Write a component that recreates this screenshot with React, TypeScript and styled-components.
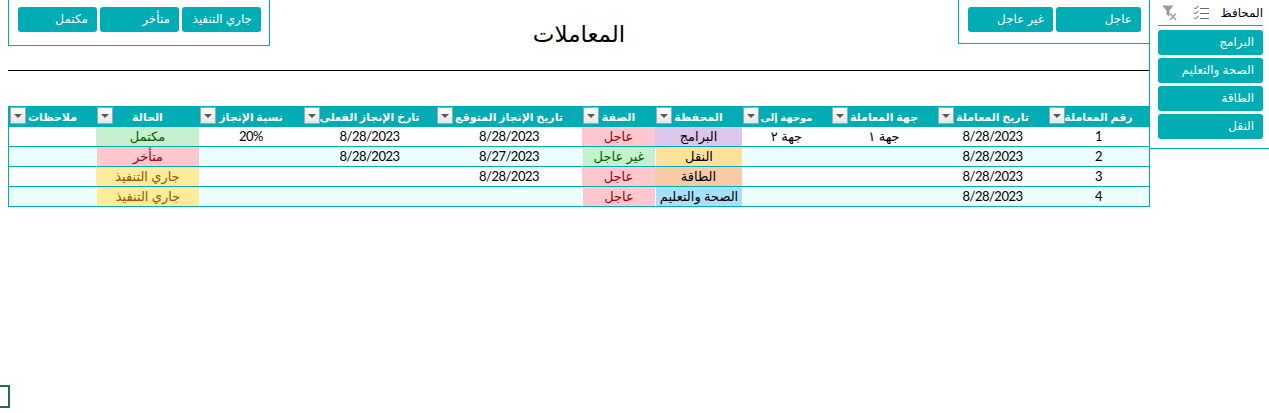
import React from "react";
import styled, { createGlobalStyle } from "styled-components";

const teal = "#00adb5";

const GlobalStyle = createGlobalStyle`
	html,
	body {
		margin: 0;
		padding: 0;
		background: #ffffff;
		overflow: hidden;
		font-family: "Lato", "DejaVu Sans", sans-serif;
	}
`;

const Page = styled.div`
	display: flex;
	align-items: flex-start;
	height: 413px;
	width: 1269px;
`;

const Main = styled.div`
	width: 1142px;
	margin-left: 8px;
	flex: none;
`;

const TopBar = styled.div`
	display: grid;
	grid-template-columns: 1fr auto 1fr;
	align-items: start;
	height: 70px;
	border-bottom: 1px solid #000000;
`;

const Slicer = styled.div<{ $bottom: number; $end?: boolean }>`
	display: flex;
	gap: 3px;
	padding: 7px 8px ${(p) => p.$bottom}px 9px;
	border: 1px solid ${teal};
	border-top: 0;
	justify-self: ${(p) => (p.$end ? "end" : "start")};
`;

const SlicerButton = styled.div<{ $width?: number }>`
	box-sizing: border-box;
	width: ${(p) => (p.$width ? `${p.$width}px` : "100%")};
	height: 25px;
	line-height: 23px;
	padding: 0 9px;
	background: ${teal};
	border-radius: 3px;
	color: #ffffff;
	font-size: 12px;
	direction: rtl;
	text-align: right;
	white-space: nowrap;
`;

const Title = styled.h1`
	margin: 19px 0 0;
	font-size: 23px;
	line-height: 28px;
	font-weight: 400;
	color: #000000;
`;

const Sheet = styled.table`
	width: 1142px;
	margin-top: 35px;
	table-layout: fixed;
	border-collapse: separate;
	border-spacing: 0;
	direction: rtl;
	border-left: 1px solid ${teal};
	border-right: 1px solid ${teal};
`;

const HeadCell = styled.th<{ $small?: boolean }>`
	position: relative;
	height: 21px;
	padding: 0;
	background: ${teal};
	color: #ffffff;
	font-size: ${(p) => (p.$small ? 10 : 11)}px;
	font-weight: 700;
	text-align: center;
	white-space: nowrap;
`;

const FilterButton = styled.span`
	position: absolute;
	left: 1px;
	top: 1px;
	box-sizing: border-box;
	width: 16px;
	height: 17px;
	border: 1px solid #a6a6a6;
	background: linear-gradient(#ffffff, #e4e6e8);
	&::after {
		content: "";
		position: absolute;
		left: 3px;
		top: 6px;
		border-left: 4px solid transparent;
		border-right: 4px solid transparent;
		border-top: 4px solid #595959;
	}
`;

const Row = styled.tr`
	&:nth-child(even) td {
		background-color: #ecfefe;
	}
`;

const Cell = styled.td`
	height: 19px;
	padding: 0;
	border-bottom: 1px solid ${teal};
	color: #000000;
	font-size: 13px;
	line-height: 19px;
	text-align: center;
	white-space: nowrap;
	overflow: hidden;
`;

const NumberCell = styled(Cell)`
	letter-spacing: -0.5px;
`;

const Fill = styled(Cell)<{ $bg: string; $fg?: string }>`
	${Row}:nth-child(n) & {
		background-color: ${(p) => p.$bg};
	}
	color: ${(p) => p.$fg ?? "#000000"};
	${Row}:nth-child(even) & {
		border-left: 1px solid #ecfefe;
	}
`;

const Sidebar = styled.aside`
	box-sizing: border-box;
	flex: none;
	width: 120px;
	height: 149px;
	margin-left: -1px;
	padding: 0 6px 0 8px;
	border-left: 1px solid ${teal};
	border-bottom: 1px solid ${teal};
`;

const SidebarHead = styled.div`
	display: flex;
	align-items: center;
	justify-content: space-between;
	height: 25px;
	border-bottom: 1px solid ${teal};
	margin-bottom: 4px;
`;

const SidebarLabel = styled.span`
	font-size: 12px;
	color: #000000;
	direction: rtl;
`;

const Icons = styled.div`
	display: flex;
	align-items: center;
	gap: 15px;
	margin-left: 4px;
`;

const SidebarList = styled.div`
	display: flex;
	flex-direction: column;
	gap: 3px;
`;

const CellCursor = styled.div`
	position: absolute;
	left: 0;
	top: 385px;
	width: 8px;
	height: 19px;
	border: 2px solid #217346;
	border-left: 0;
`;

const green = { bg: "#c6efce", fg: "#006100" };
const red = { bg: "#ffc7ce", fg: "#9c0006" };
const yellow = { bg: "#ffeb9c", fg: "#9c5700" };

const columns = [
	{ title: "رقم المعاملة", width: 101 },
	{ title: "تاريخ المعاملة", width: 111 },
	{ title: "جهة المعاملة", width: 106 },
	{ title: "موجهة إلى", width: 89, small: true },
	{ title: "المحفظة", width: 87 },
	{ title: "الصفة", width: 73 },
	{ title: "تاريخ الإنجاز المتوقع", width: 146 },
	{ title: "تارخ الإنجاز الفعلى", width: 133 },
	{ title: "نسبة الإنجاز", width: 104 },
	{ title: "الحالة", width: 103 },
	{ title: "ملاحظات", width: 87 },
];

const rows = [
	{
		id: 1, date: "8/28/2023", from: "جهة ١", to: "جهة ٢",
		wallet: "البرامج", walletBg: "#dcc6ec", kind: "عاجل", kindTone: red,
		due: "8/28/2023", done: "8/28/2023", pct: "20%", status: "مكتمل", tone: green,
	},
	{
		id: 2, date: "8/28/2023", from: "", to: "",
		wallet: "النقل", walletBg: "#fee299", kind: "غير عاجل", kindTone: green,
		due: "8/27/2023", done: "8/28/2023", pct: "", status: "متأخر", tone: red,
	},
	{
		id: 3, date: "8/28/2023", from: "", to: "",
		wallet: "الطاقة", walletBg: "#f8cba6", kind: "عاجل", kindTone: red,
		due: "8/28/2023", done: "", pct: "", status: "جاري التنفيذ", tone: yellow,
	},
	{
		id: 4, date: "8/28/2023", from: "", to: "",
		wallet: "الصحة والتعليم", walletBg: "#a8e0fb", kind: "عاجل", kindTone: red,
		due: "", done: "", pct: "", status: "جاري التنفيذ", tone: yellow,
	},
];

function ClearFilterIcon() {
	return (
		<svg width="16" height="16" viewBox="0 0 16 16">
			<path d="M0 0.5h11.5l-4 5v6l-3-2v-4z" fill="#9a9a9a" />
			<path d="M8 8.5l6 6.5M14 8.5l-6 6.5" stroke="#a8a8a8" strokeWidth="1.8" fill="none" />
		</svg>
	);
}

function MultiSelectIcon() {
	return (
		<svg width="16" height="16" viewBox="0 0 16 16" fill="none">
			<path d="M1 2.5l1.5 1.5 3-3.2M1 7.5L2.5 9l3-3.2M1 12.5L2.5 14l3-3.2" stroke="#555555" />
			<path d="M7 3.5h9M7 8.5h9M7 13.5h9" stroke="#6a6a6a" strokeWidth="1.2" />
		</svg>
	);
}

export default function App() {
	return (
		<Page>
			<GlobalStyle />
			<Main>
				<TopBar>
					<Slicer $bottom={13}>
						<SlicerButton $width={79}>مكتمل</SlicerButton>
						<SlicerButton $width={79}>متأخر</SlicerButton>
						<SlicerButton $width={79}>جاري التنفيذ</SlicerButton>
					</Slicer>
					<Title>المعاملات</Title>
					<Slicer $bottom={11} $end>
						<SlicerButton $width={85}>غير عاجل</SlicerButton>
						<SlicerButton $width={85}>عاجل</SlicerButton>
					</Slicer>
				</TopBar>
				<Sheet>
					<colgroup>
						{columns.map((c) => (
							<col key={c.title} width={c.width} />
						))}
					</colgroup>
					<thead>
						<tr>
							{columns.map((c) => (
								<HeadCell key={c.title} $small={c.small}>
									{c.title}
									<FilterButton />
								</HeadCell>
							))}
						</tr>
					</thead>
					<tbody>
						{rows.map((r) => (
							<Row key={r.id}>
								<NumberCell>{r.id}</NumberCell>
								<NumberCell>{r.date}</NumberCell>
								<Cell>{r.from}</Cell>
								<Cell>{r.to}</Cell>
								<Fill $bg={r.walletBg}>{r.wallet}</Fill>
								<Fill $bg={r.kindTone.bg} $fg={r.kindTone.fg}>
									{r.kind}
								</Fill>
								<NumberCell>{r.due}</NumberCell>
								<NumberCell>{r.done}</NumberCell>
								<NumberCell>{r.pct}</NumberCell>
								<Fill $bg={r.tone.bg} $fg={r.tone.fg}>
									{r.status}
								</Fill>
								<Cell />
							</Row>
						))}
					</tbody>
				</Sheet>
			</Main>
			<Sidebar>
				<SidebarHead>
					<Icons>
						<ClearFilterIcon />
						<MultiSelectIcon />
					</Icons>
					<SidebarLabel>المحافظ</SidebarLabel>
				</SidebarHead>
				<SidebarList>
					<SlicerButton>البرامج</SlicerButton>
					<SlicerButton>الصحة والتعليم</SlicerButton>
					<SlicerButton>الطاقة</SlicerButton>
					<SlicerButton>النقل</SlicerButton>
				</SidebarList>
			</Sidebar>
			<CellCursor />
		</Page>
	);
}
